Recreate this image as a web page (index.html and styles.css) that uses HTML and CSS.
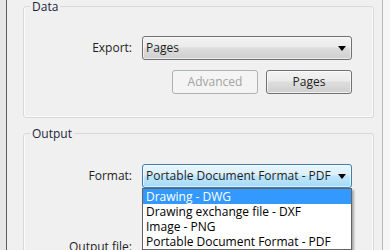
FILE: index.html
```html
<!DOCTYPE html>
<html>
<head>
<meta charset="utf-8">
<link rel="stylesheet" href="styles.css">
</head>
<body>
<div class="screen">
  <div class="edge-left"></div>
  <div class="dialog">
    <fieldset class="group group-data">
      <legend class="legend">Data</legend>
      <div class="form form-data">
        <span class="label">Export:</span>
        <div class="combo"><span class="combo-text">Pages</span><span class="arrow"></span></div>
        <div class="buttons">
          <button class="btn" disabled>Advanced</button>
          <button class="btn">Pages</button>
        </div>
      </div>
    </fieldset>
    <fieldset class="group group-output">
      <legend class="legend">Output</legend>
      <div class="form form-output">
        <span class="label">Format:</span>
        <div class="combo-wrap">
          <div class="combo combo-hot"><span class="combo-text">Portable Document Format - PDF</span><span class="arrow"></span></div>
          <ul class="list">
            <li class="item item-selected">Drawing - DWG</li>
            <li class="item">Drawing exchange file - DXF</li>
            <li class="item">Image - PNG</li>
            <li class="item">Portable Document Format - PDF</li>
          </ul>
        </div>
        <span class="label label-file">Output file:</span>
        <div class="field field-file"></div>
      </div>
    </fieldset>
  </div>
  <div class="edge-right"></div>
</div>
</body>
</html>
```

FILE: styles.css
```css
html, body {
  margin: 0;
  padding: 0;
}

body {
  font-family: "Open Sans", "Noto Sans", "DejaVu Sans", sans-serif;
  font-size: 12px;
  color: #1e1e1e;
  background: #f0f0f0;
}

.screen {
  display: flex;
  height: 250px;
  overflow: hidden;
  background: #f0f0f0;
}

.edge-left {
  width: 6px;
  flex: none;
  background: #e7e7e7;
  border-right: 1px solid #5e5e5e;
}

.edge-right {
  width: 7px;
  flex: none;
  background: #f6f6f6;
  border-left: 1px solid #b8b8b8;
}

.dialog {
  flex: 1;
  min-width: 0;
  padding: 0 8px 0 16px;
  background: #f0f0f0;
}

.group {
  margin: 0;
  padding: 0;
  min-width: 0;
  border: 1px solid #d5d9dc;
  border-radius: 3px;
  box-shadow: inset 1px 0 0 #fbfbfb, inset -1px -1px 0 #fbfbfb;
}

.group-output {
  margin-top: 9px;
}

.legend {
  margin-left: 6px;
  padding: 0 2px 0 2px;
  line-height: 13px;
  color: #1e1e3c;
}

.form {
  display: grid;
  grid-template-columns: 108px 210px;
  column-gap: 10px;
  align-items: center;
}

.form-data {
  padding: 23px 0 23px 0;
  row-gap: 10px;
}

.form-output {
  padding: 24px 0 40px 0;
  row-gap: 47px;
}

.label {
  text-align: right;
  line-height: 16px;
}

.combo-wrap {
  position: relative;
}

.combo {
  box-sizing: border-box;
  height: 24px;
  display: flex;
  align-items: center;
  justify-content: space-between;
  padding: 0 5px 0 3px;
  border: 1px solid #707070;
  border-radius: 3px;
  background: linear-gradient(#f2f2f2 0%, #ebebeb 45%, #dddddd 50%, #cfcfcf 100%);
  box-shadow: inset 0 0 0 1px rgba(255, 255, 255, 0.6);
}

.combo-hot {
  border-color: #3c7fb1;
  background: linear-gradient(#eaf6fd 0%, #d9f0fc 45%, #bee6fd 50%, #a7d9f5 100%);
}

.combo-text {
  white-space: nowrap;
  line-height: 16px;
}

.arrow {
  width: 0;
  height: 0;
  border-left: 4px solid transparent;
  border-right: 4px solid transparent;
  border-top: 5px solid #000;
  margin-top: 1px;
}

.buttons {
  grid-column: 2;
  display: flex;
  justify-content: flex-end;
  gap: 8px;
}

.btn {
  box-sizing: border-box;
  width: 86px;
  height: 24px;
  padding: 0;
  font: inherit;
  line-height: 16px;
  color: #1e1e1e;
  border: 1px solid #707070;
  border-radius: 3px;
  background: linear-gradient(#f2f2f2 0%, #ebebeb 45%, #dddddd 50%, #cfcfcf 100%);
  box-shadow: inset 0 0 0 1px rgba(255, 255, 255, 0.7);
}

.btn:disabled {
  color: #a3a3a3;
  border-color: #adb2b5;
  background: #f4f4f4;
  box-shadow: none;
}

.list {
  position: absolute;
  top: 100%;
  left: 0;
  width: 210px;
  box-sizing: border-box;
  margin: 0;
  padding: 0;
  list-style: none;
  background: #ffffff;
  border: 1px solid #646464;
  box-shadow: 2px 2px 2px rgba(0, 0, 0, 0.3);
  z-index: 2;
}

.item {
  height: 15px;
  line-height: 15px;
  padding-left: 3px;
  white-space: nowrap;
  color: #000;
}

.item-selected {
  background: #3399ff;
  color: #ffffff;
}

.field {
  height: 23px;
  border: 1px solid #abadb3;
  background: #fff;
  box-sizing: border-box;
}
```
